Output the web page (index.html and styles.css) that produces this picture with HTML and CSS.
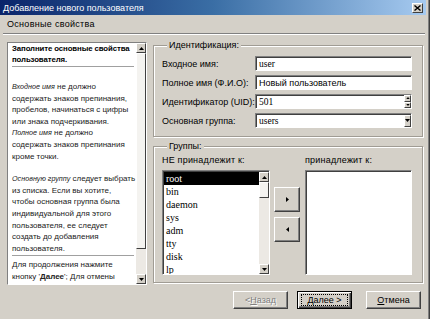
FILE: index.html
```html
<!DOCTYPE html>
<html lang="ru">
<head>
    <meta charset="UTF-8">
    <meta name="viewport" content="width=device-width, initial-scale=1.0">
    <title>Добавление нового пользователя</title>
    <link rel="stylesheet" href="styles.css">
</head>
<body>
    <div class="window">
        <div class="titlebar">
            <span class="title">Добавление нового пользователя</span>
            <span class="close">
                <svg width="7" height="6" viewBox="0 0 7 6"><path d="M0.5 0.5 L6.5 5.5 M6.5 0.5 L0.5 5.5" stroke="#000" stroke-width="1.4" fill="none"/></svg>
            </span>
        </div>
        <div class="page-head">Основные свойства</div>

        <div class="content">
            <div class="columns">
                <div class="help">
                    <div class="help-text">
                        <p class="lead">Заполните основные свойства<br>пользователя.</p>
                        <div class="rule"></div>
                        <p class="para first"><i>Входное имя</i> не должно<br>содержать знаков препинания,<br>пробелов, начинаться с цифры<br>или знака подчеркивания.<br><i>Полное имя</i> не должно<br>содержать знаков препинания<br>кроме точки.</p>
                        <p class="para"><i>Основную группу</i> следует выбрать<br>из списка. Если вы хотите,<br>чтобы основная группа была<br>индивидуальной для этого<br>пользователя, ее следует<br>создать до добавления<br>пользователя.</p>
                        <div class="rule"></div>
                        <p class="para last">Для продолжения нажмите<br>кнопку '<b>Далее</b>'; Для отмены</p>
                    </div>
                    <div class="vscroll">
                        <span class="sbtn"><svg width="5" height="3" viewBox="0 0 5 3"><polygon points="0,3 5,3 2.5,0"/></svg></span>
                        <span class="thumb big"></span>
                        <span class="track"></span>
                        <span class="sbtn"><svg width="5" height="3" viewBox="0 0 5 3"><polygon points="0,0 5,0 2.5,3"/></svg></span>
                    </div>
                </div>

                <div class="forms">
                    <fieldset class="group ident">
                        <legend>Идентификация:</legend>
                        <div class="row">
                            <label>Входное имя:</label>
                            <div class="field"><span class="serif">user</span></div>
                        </div>
                        <div class="row">
                            <label>Полное имя (Ф.И.О):</label>
                            <div class="field"><span>Новый пользователь</span></div>
                        </div>
                        <div class="row">
                            <label>Идентификатор (UID):</label>
                            <div class="field">
                                <span class="serif">501</span>
                                <span class="spin">
                                    <span class="sbtn half"><svg width="5" height="3" viewBox="0 0 5 3"><polygon points="0,3 5,3 2.5,0"/></svg></span>
                                    <span class="sbtn half"><svg width="5" height="3" viewBox="0 0 5 3"><polygon points="0,0 5,0 2.5,3"/></svg></span>
                                </span>
                            </div>
                        </div>
                        <div class="row">
                            <label>Основная группа:</label>
                            <div class="field">
                                <span class="serif">users</span>
                                <span class="sbtn drop"><svg width="5" height="3" viewBox="0 0 5 3"><polygon points="0,0 5,0 2.5,3"/></svg></span>
                            </div>
                        </div>
                    </fieldset>

                    <fieldset class="group groups">
                        <legend>Группы:</legend>
                        <div class="lists">
                            <div class="list-col left">
                                <div class="list-label">НЕ принадлежит к:</div>
                                <div class="listbox">
                                    <ul class="items">
                                        <li class="selected">root</li>
                                        <li>bin</li>
                                        <li>daemon</li>
                                        <li>sys</li>
                                        <li>adm</li>
                                        <li>tty</li>
                                        <li>disk</li>
                                        <li>lp</li>
                                    </ul>
                                    <div class="vscroll">
                                        <span class="sbtn"><svg width="5" height="3" viewBox="0 0 5 3"><polygon points="0,3 5,3 2.5,0"/></svg></span>
                                        <span class="thumb small"></span>
                                        <span class="track"></span>
                                        <span class="sbtn"><svg width="5" height="3" viewBox="0 0 5 3"><polygon points="0,0 5,0 2.5,3"/></svg></span>
                                    </div>
                                </div>
                            </div>
                            <div class="move-btns">
                                <span class="btn move"><svg width="3" height="5" viewBox="0 0 3 5"><polygon points="0,0 3,2.5 0,5"/></svg></span>
                                <span class="btn move"><svg width="3" height="5" viewBox="0 0 3 5"><polygon points="3,0 0,2.5 3,5"/></svg></span>
                            </div>
                            <div class="list-col right">
                                <div class="list-label">принадлежит к:</div>
                                <div class="listbox"></div>
                            </div>
                        </div>
                    </fieldset>
                </div>
            </div>

            <div class="buttons">
                <span class="btn wide disabled">&lt; <u>Н</u>азад</span>
                <span class="btn wide default"><span class="focus"><u>Д</u>алее &gt;</span></span>
                <span class="btn wide"><u>О</u>тмена</span>
            </div>
        </div>
    </div>
</body>
</html>
```

FILE: styles.css
```css
body {
    margin: 0;
    font-family: "Liberation Sans", Arial, sans-serif;
    font-size: 9px;
    color: #000;
    background: #d4d0c8;
}
.window {
    box-sizing: border-box;
    width: 430px;
    height: 319px;
    background: #d4d0c8;
    border-right: 1px solid #404040;
    box-shadow: inset -1px 0 #808080;
    overflow: hidden;
}
.titlebar {
    height: 15px;
    margin-right: 3px;
    padding-left: 3px;
    display: flex;
    align-items: center;
    justify-content: space-between;
    background: linear-gradient(to right, #0a246a, #3a6ea5 50%, #a6caf0);
    color: #fff;
}
.title {
    font-size: 9px;
}
.close {
    box-sizing: border-box;
    width: 11px;
    height: 10px;
    margin-right: 3px;
    display: flex;
    align-items: center;
    justify-content: center;
    background: #d4d0c8;
    border: 1px solid;
    border-color: #fff #404040 #404040 #fff;
}
.page-head {
    height: 18px;
    line-height: 18px;
    margin: 0 4px 0 3px;
    padding-left: 4px;
    border-bottom: 1px solid #808080;
    box-shadow: 0 1px #fff;
    letter-spacing: 0.3px;
}
.content {
    padding: 6px 5px 0 7px;
}
.columns {
    display: flex;
    gap: 6px;
}

/* help panel */
.help {
    box-sizing: border-box;
    width: 140px;
    height: 243px;
    margin-top: 2px;
    display: flex;
    background: #fff;
    border: 1px solid;
    border-color: #808080 #fff #fff #808080;
}
.help-text {
    flex: 1;
    padding: 1px 0 0 4px;
    overflow: hidden;
    white-space: nowrap;
    font-size: 8px;
    color: #222;
}
.help-text p {
    margin: 0;
    line-height: 11.6px;
}
.help-text .lead {
    font-weight: bold;
    font-size: 7.8px;
    line-height: 10.5px;
    letter-spacing: -0.1px;
    color: #000;
}
.help-text i {
    font-size: 7.2px;
}
.rule {
    height: 1px;
    margin: 1px 2px 0 0;
    background: #a0a0a0;
}
.para.first {
    margin-top: 14px;
}
.para + .para {
    margin-top: 11px;
}
.para.last {
    margin-top: 3px;
}

/* scrollbars */
.vscroll {
    width: 10px;
    display: flex;
    flex-direction: column;
    background: #ece9e4;
}
.sbtn {
    box-sizing: border-box;
    height: 10px;
    display: flex;
    align-items: center;
    justify-content: center;
    background: #d4d0c8;
    border: 1px solid;
    border-color: #fff #404040 #404040 #fff;
}
.thumb {
    box-sizing: border-box;
    background: #f4f3f0;
    border: 1px solid;
    border-color: #fff #404040 #404040 #fff;
}
.thumb.big {
    height: 196px;
}
.thumb.small {
    height: 16px;
}
.track {
    flex: 1;
}

/* group boxes */
.forms {
    width: 270px;
    display: flex;
    flex-direction: column;
    gap: 4px;
}
.group {
    margin: 0;
    min-width: 0;
    border: 1px solid #a09c94;
    box-shadow: inset 1px 1px #fff, 1px 1px #fff;
}
.group legend {
    margin-left: 5px;
    padding: 0 2px;
    line-height: 10px;
    background: #d4d0c8;
}
.ident {
    padding: 6px 10px 8px 8px;
}
.row {
    display: flex;
    align-items: center;
    height: 15px;
    margin-bottom: 4px;
}
.row:last-child {
    margin-bottom: 0;
}
.row label {
    width: 93px;
}
.field {
    box-sizing: border-box;
    width: 157px;
    height: 15px;
    padding-left: 3px;
    display: flex;
    align-items: center;
    justify-content: space-between;
    background: #fff;
    border: 1px solid;
    border-color: #808080 #fff #fff #808080;
    box-shadow: inset 1px 1px #404040;
}
.serif {
    font-family: "Liberation Serif", "Times New Roman", serif;
    font-size: 9.5px;
}
.spin {
    width: 7px;
    height: 13px;
    display: flex;
    flex-direction: column;
}
.sbtn.half {
    height: 6.5px;
}
.sbtn.half svg {
    width: 4px;
    height: 2px;
}
.sbtn.drop {
    width: 7px;
    height: 12px;
}

.groups {
    padding: 4px 10px 7px 8px;
}
.lists {
    display: flex;
}
.list-col.left {
    width: 108px;
}
.list-col.right {
    width: 107px;
}
.list-label {
    line-height: 10px;
    margin-bottom: 5px;
    letter-spacing: 0.2px;
}
.listbox {
    box-sizing: border-box;
    height: 105px;
    display: flex;
    background: #fff;
    border: 1px solid;
    border-color: #808080 #fff #fff #808080;
    box-shadow: inset 1px 1px #404040;
    padding: 1px 0 0 1px;
    overflow: hidden;
}
.items {
    flex: 1;
    margin: 0;
    padding: 0;
    list-style: none;
    font-family: "Liberation Serif", "Times New Roman", serif;
    font-size: 10px;
}
.items li {
    height: 13px;
    line-height: 13px;
    padding-left: 2px;
}
.items li.selected {
    background: #000;
    color: #fff;
}
.move-btns {
    width: 26px;
    margin: 32px 5px 0 4px;
    display: flex;
    flex-direction: column;
    gap: 5px;
}

/* buttons */
.btn {
    box-sizing: border-box;
    display: flex;
    align-items: center;
    justify-content: center;
    background: #d4d0c8;
    border: 1px solid;
    border-color: #fff #404040 #404040 #fff;
    box-shadow: inset -1px -1px #808080;
}
.btn.move {
    height: 25px;
}
.buttons {
    display: flex;
    justify-content: flex-end;
    margin: 6px 3px 0 0;
}
.btn.wide {
    width: 55px;
    height: 18px;
}
.btn.disabled {
    margin-right: 9px;
    color: #808080;
    text-shadow: 1px 1px #fff;
}
.btn.default {
    margin-right: 14px;
    border-color: #000;
    box-shadow: inset 1px 1px #fff, inset -1px -1px #404040, inset -2px -2px #808080;
}
.focus {
    box-sizing: border-box;
    width: 47px;
    height: 12px;
    display: flex;
    align-items: center;
    justify-content: center;
    border: 1px dotted #000;
}
```
